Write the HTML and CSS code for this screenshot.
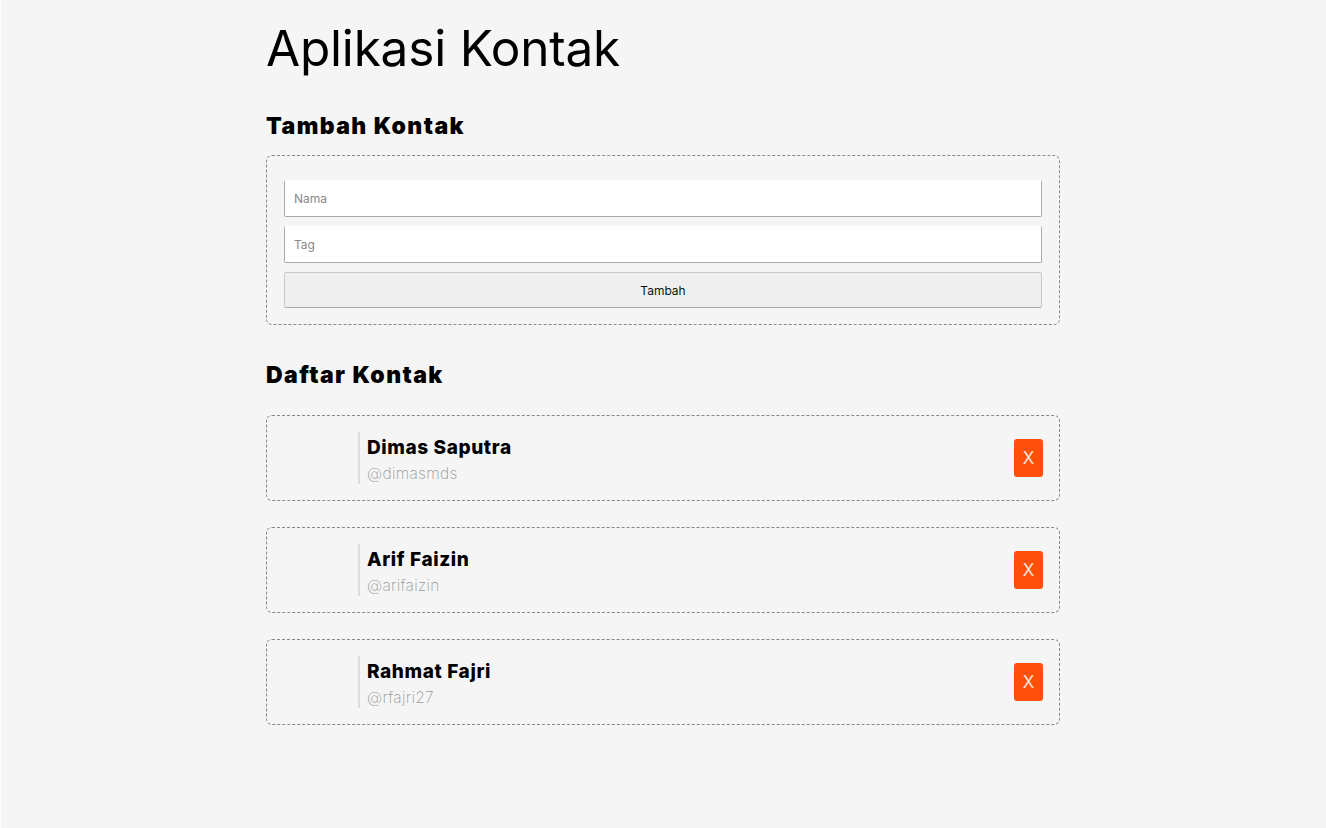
FILE: index.html
```html
<!DOCTYPE html>
<html>
<head>
<meta charset="utf-8">
<link rel="stylesheet" href="styles.css">
</head>
<body>
<div class="container">
  <h1 class="title">Aplikasi Kontak</h1>
  <h2 class="section-title">Tambah Kontak</h2>
  <form class="form-box">
    <input class="field" type="text" placeholder="Nama">
    <input class="field" type="text" placeholder="Tag">
    <button class="submit" type="button">Tambah</button>
  </form>
  <h2 class="section-title list-title">Daftar Kontak</h2>
  <div class="list">
    <div class="card">
      <div class="avatar"></div>
      <div class="info">
        <div class="name">Dimas Saputra</div>
        <div class="tag">@dimasmds</div>
      </div>
      <button class="del" type="button">X</button>
    </div>
    <div class="card">
      <div class="avatar"></div>
      <div class="info">
        <div class="name">Arif Faizin</div>
        <div class="tag">@arifaizin</div>
      </div>
      <button class="del" type="button">X</button>
    </div>
    <div class="card">
      <div class="avatar"></div>
      <div class="info">
        <div class="name">Rahmat Fajri</div>
        <div class="tag">@rfajri27</div>
      </div>
      <button class="del" type="button">X</button>
    </div>
  </div>
</div>
</body>
</html>
```

FILE: styles.css
```css
html, body {
  margin: 0;
  padding: 0;
}
body {
  background: #f5f5f5;
  font-family: Inter, "Noto Sans", sans-serif;
  color: #000;
  box-shadow: inset 1px 0 0 #fff;
  min-height: 828px;
}
.container {
  width: 794px;
  margin: 0 auto;
  padding-top: 20px;
}
.title {
  font-size: 49.5px;
  font-weight: 400;
  line-height: 56px;
  margin: 0 0 36px 0;
  letter-spacing: -0.2px;
}
.section-title {
  font-size: 23px;
  font-weight: 900;
  line-height: 28px;
  margin: 0 0 15px 0;
  letter-spacing: 1.4px;
}
.list-title {
  margin-top: 36px;
  margin-bottom: 26px;
}
.form-box {
  border: 1px dashed #888;
  border-radius: 6px;
  padding: 24px 17px 16px 17px;
  display: flex;
  flex-direction: column;
  gap: 9px;
}
.field {
  height: 37px;
  box-sizing: border-box;
  background: #fff;
  border: 1px solid #aaa;
  border-top-color: #fff;
  border-radius: 2px;
  padding: 0 9px;
  font-family: Inter, "Noto Sans", sans-serif;
  font-size: 12px;
  outline: none;
}
.field::placeholder {
  color: #888;
}
.submit {
  height: 36px;
  background: #efefef;
  border: 1px solid #c8c8c8;
  border-bottom-color: #aaa;
  border-radius: 2px;
  font-family: Inter, "Noto Sans", sans-serif;
  font-size: 12px;
  color: #111;
}
.list {
  display: flex;
  flex-direction: column;
  gap: 26px;
}
.card {
  border: 1px dashed #888;
  border-radius: 6px;
  padding: 16px;
  display: flex;
  align-items: center;
  height: 86px;
  box-sizing: border-box;
}
.avatar {
  width: 75px;
  flex: none;
}
.info {
  flex: 1;
  border-left: 2px solid #ddd;
  padding-left: 7px;
  padding-top: 4px;
  height: 52px;
  box-sizing: border-box;
  display: flex;
  flex-direction: column;
  justify-content: flex-start;
}
.name {
  font-size: 19px;
  font-weight: 800;
  line-height: 24px;
  letter-spacing: 0.6px;
}
.tag {
  font-size: 15.5px;
  font-weight: 200;
  color: #999;
  line-height: 22px;
  margin-top: 3px;
  letter-spacing: 0.3px;
}
.del {
  width: 29px;
  height: 38px;
  background: #ff4f0a;
  color: #ffe6d8;
  border: none;
  border-radius: 3px;
  font-family: Inter, "Noto Sans", sans-serif;
  font-size: 17px;
  padding: 0;
}
```
